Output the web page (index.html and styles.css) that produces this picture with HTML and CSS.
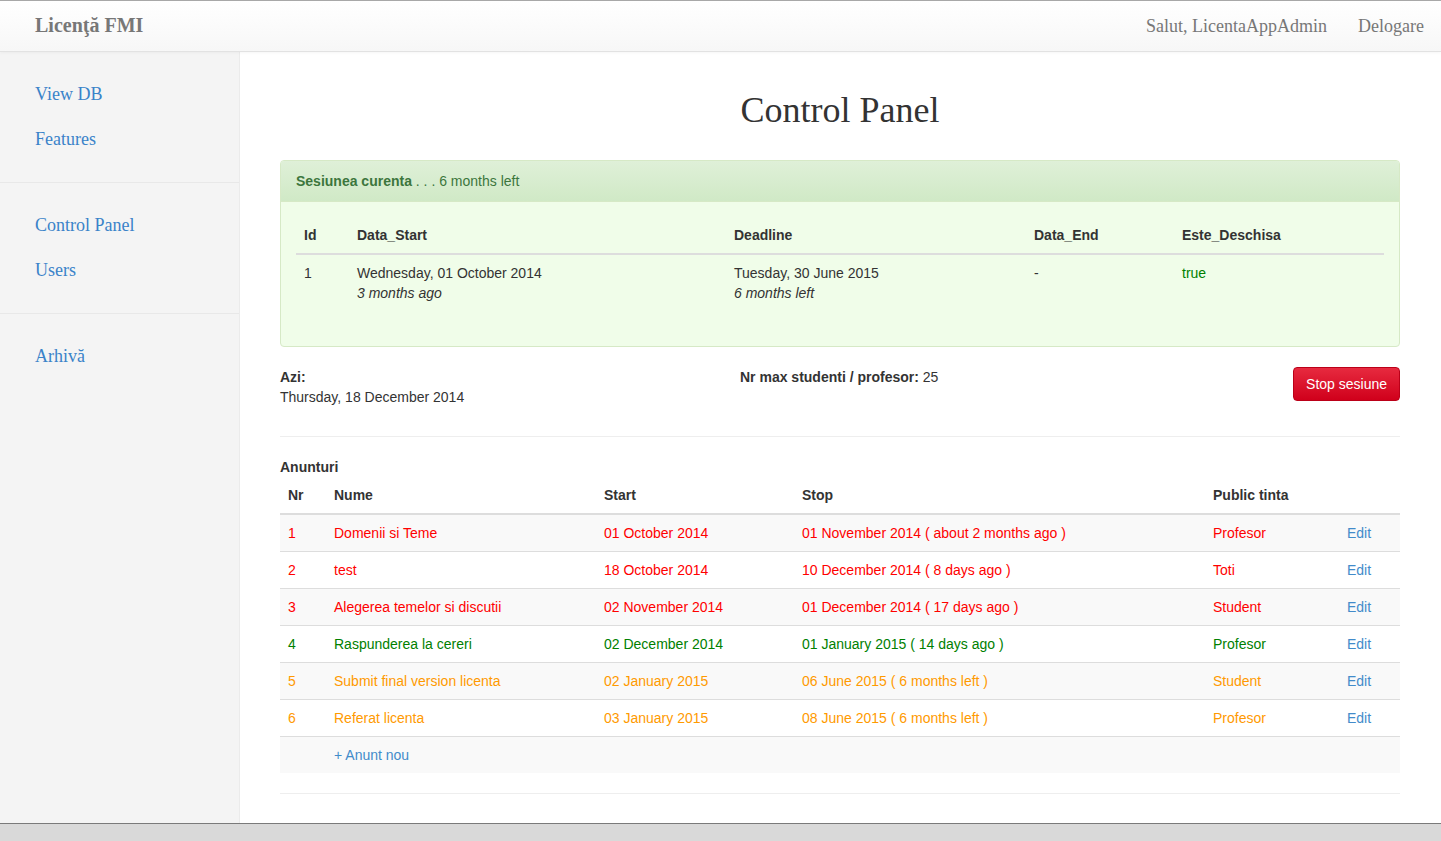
FILE: index.html
```html
<!DOCTYPE html>
<html>
<head>
<meta charset="utf-8">
<title>Licenţă FMI</title>
<link rel="stylesheet" href="styles.css">
</head>
<body>
<div class="page">
  <header class="navbar">
    <a class="brand" href="#">Licenţă FMI</a>
    <nav class="nav-right">
      <span class="nav-text">Salut, LicentaAppAdmin</span>
      <a class="nav-link" href="#">Delogare</a>
    </nav>
  </header>
  <div class="wrap">
    <aside class="sidebar">
      <ul class="side-group">
        <li><a href="#">View DB</a></li>
        <li><a href="#">Features</a></li>
      </ul>
      <ul class="side-group">
        <li><a href="#">Control Panel</a></li>
        <li><a href="#">Users</a></li>
      </ul>
      <ul class="side-group last">
        <li><a href="#">Arhivă</a></li>
      </ul>
    </aside>
    <main class="main">
      <h1 class="title">Control Panel</h1>
      <section class="panel">
        <div class="panel-heading"><strong>Sesiunea curenta</strong> . . . 6 months left</div>
        <div class="panel-body">
          <table class="tbl session">
            <thead>
              <tr><th class="c-id">Id</th><th class="c-start">Data_Start</th><th class="c-dead">Deadline</th><th class="c-end">Data_End</th><th>Este_Deschisa</th></tr>
            </thead>
            <tbody>
              <tr>
                <td>1</td>
                <td>Wednesday, 01 October 2014<br><em>3 months ago</em></td>
                <td>Tuesday, 30 June 2015<br><em>6 months left</em></td>
                <td>-</td>
                <td class="ok">true</td>
              </tr>
            </tbody>
          </table>
        </div>
      </section>
      <div class="info">
        <div class="info-today"><strong>Azi:</strong><br>Thursday, 18 December 2014</div>
        <div class="info-max"><strong>Nr max studenti / profesor:</strong> 25</div>
        <button class="btn-danger" type="button">Stop sesiune</button>
      </div>
      <hr class="sep first">
      <div class="section-title">Anunturi</div>
      <table class="tbl ann">
        <thead>
          <tr><th class="a-nr">Nr</th><th class="a-name">Nume</th><th class="a-start">Start</th><th class="a-stop">Stop</th><th class="a-pub">Public tinta</th><th></th></tr>
        </thead>
        <tbody>
          <tr class="red"><td>1</td><td>Domenii si Teme</td><td>01 October 2014</td><td>01 November 2014 ( about 2 months ago )</td><td>Profesor</td><td><a href="#">Edit</a></td></tr>
          <tr class="red"><td>2</td><td>test</td><td>18 October 2014</td><td>10 December 2014 ( 8 days ago )</td><td>Toti</td><td><a href="#">Edit</a></td></tr>
          <tr class="red"><td>3</td><td>Alegerea temelor si discutii</td><td>02 November 2014</td><td>01 December 2014 ( 17 days ago )</td><td>Student</td><td><a href="#">Edit</a></td></tr>
          <tr class="green"><td>4</td><td>Raspunderea la cereri</td><td>02 December 2014</td><td>01 January 2015 ( 14 days ago )</td><td>Profesor</td><td><a href="#">Edit</a></td></tr>
          <tr class="orange"><td>5</td><td>Submit final version licenta</td><td>02 January 2015</td><td>06 June 2015 ( 6 months left )</td><td>Student</td><td><a href="#">Edit</a></td></tr>
          <tr class="orange"><td>6</td><td>Referat licenta</td><td>03 January 2015</td><td>08 June 2015 ( 6 months left )</td><td>Profesor</td><td><a href="#">Edit</a></td></tr>
          <tr><td></td><td><a href="#">+ Anunt nou</a></td><td></td><td></td><td></td><td></td></tr>
        </tbody>
      </table>
      <hr class="sep">
    </main>
  </div>
  <div class="bottom-bar"></div>
</div>
</body>
</html>
```

FILE: styles.css
```css
* { box-sizing: border-box; }
html, body { margin: 0; padding: 0; }
body {
  font-family: "Liberation Sans", Arial, sans-serif;
  font-size: 14px;
  line-height: 20px;
  color: #333;
  background: #fff;
}
a { color: #428bca; text-decoration: none; }

.page {
  height: 841px;
  display: flex;
  flex-direction: column;
  border-top: 1px solid #a8a8a8;
  overflow: hidden;
}

.navbar {
  height: 51px;
  flex: 0 0 51px;
  display: flex;
  align-items: center;
  justify-content: space-between;
  padding: 0 17px 0 35px;
  background: linear-gradient(#ffffff, #f7f7f7);
  border-bottom: 1px solid #e2e2e2;
  box-shadow: 0 1px 3px rgba(0,0,0,0.04);
  font-family: "Liberation Serif", "Times New Roman", serif;
  position: relative;
  z-index: 1;
}
.brand {
  color: #777;
  font-weight: bold;
  font-size: 20px;
  line-height: 24px;
  margin-top: -2px;
}
.nav-right { display: flex; align-items: center; gap: 31px; font-size: 18px; color: #777; }
.nav-link { color: #777; }

.wrap { flex: 1; display: flex; min-height: 0; }

.sidebar {
  width: 240px;
  flex: 0 0 240px;
  background: #f4f4f4;
  border-right: 1px solid #ebebeb;
  font-family: "Liberation Serif", "Times New Roman", serif;
}
.side-group {
  list-style: none;
  margin: 0;
  padding: 20px 0;
  border-bottom: 1px solid #e8e8e8;
}
.side-group.last { border-bottom: 0; }
.side-group a {
  display: block;
  padding: 10px 35px;
  line-height: 25px;
  font-size: 18px;
  color: #3a83c9;
}

.main { flex: 1; padding: 0 41px 0 40px; min-width: 0; }

.title {
  font-family: "Liberation Serif", "Times New Roman", serif;
  font-weight: normal;
  font-size: 36px;
  line-height: 40px;
  text-align: center;
  margin: 38px 0 30px;
  color: #333;
}

.panel {
  border: 1px solid #d6e9c6;
  border-radius: 4px;
  background: #f0fde9;
  overflow: hidden;
}
.panel-heading {
  padding: 10px 15px;
  line-height: 20px;
  color: #3c763d;
  background: linear-gradient(#dff0d8, #d0e9c6);
  border-bottom: 1px solid #d6e9c6;
}
.panel-body { padding: 15px 15px 15px; }

.tbl { width: 100%; border-collapse: collapse; table-layout: fixed; }
.tbl th, .tbl td {
  padding: 8px;
  text-align: left;
  vertical-align: top;
  line-height: 20px;
}
.tbl th { font-weight: bold; border-bottom: 2px solid #ddd; }
.session { margin-bottom: 20px; }
.session .c-id { width: 53px; }
.session .c-start { width: 377px; }
.session .c-dead { width: 300px; }
.session .c-end { width: 148px; }
.session em { font-style: italic; }
.ok { color: #008000; }

.info {
  display: flex;
  align-items: flex-start;
  margin-top: 20px;
  height: 40px;
}
.info-today { width: 460px; }
.info-max { flex: 1; }
.btn-danger {
  font-family: "Liberation Sans", Arial, sans-serif;
  font-size: 14px;
  line-height: 20px;
  padding: 6px 12px;
  color: #fff;
  background: linear-gradient(#e72a3f, #d0001b);
  border: 1px solid #bb0018;
  border-radius: 4px;
  cursor: pointer;
}

.sep { border: 0; border-top: 1px solid #eee; margin: 0; }
.sep.first { margin-top: 29px; }

.section-title { font-weight: bold; margin-top: 20px; line-height: 20px; }

.ann { margin-bottom: 20px; }
.ann .a-nr { width: 46px; }
.ann .a-name { width: 270px; }
.ann .a-start { width: 198px; }
.ann .a-stop { width: 411px; }
.ann .a-pub { width: 134px; }
.ann td { border-top: 1px solid #ddd; }
.ann tbody tr:first-child td { border-top: 0; }
.ann tbody tr:nth-child(odd) { background: #f9f9f9; }
.ann tr.red td { color: #ff0000; }
.ann tr.green td { color: #008000; }
.ann tr.orange td { color: #ff9a00; }
.ann tr td a { color: #428bca; }

.bottom-bar {
  flex: 0 0 18px;
  background: #d9d9d9;
  border-top: 1px solid #7a7a7a;
}
```
